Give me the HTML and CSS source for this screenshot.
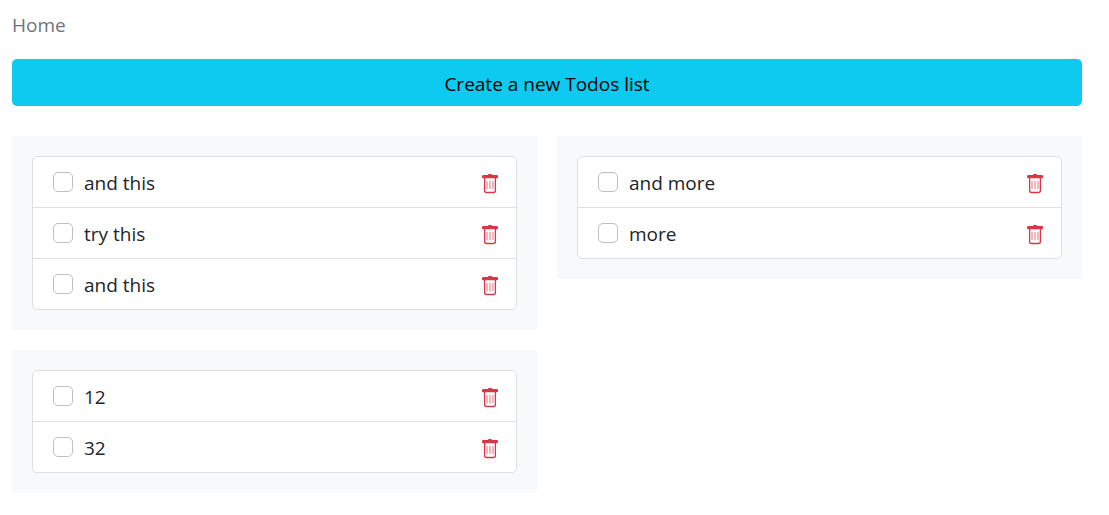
FILE: index.html
```html
<!DOCTYPE html>
<html lang="en">
<head>
<meta charset="utf-8">
<meta name="viewport" content="width=device-width, initial-scale=1">
<title>Todos</title>
<link rel="stylesheet" href="styles.css">
</head>
<body>
<svg class="sprite" aria-hidden="true">
  <symbol id="trash" viewBox="0 0 16 20">
    <path fill="currentColor" d="M1.200 1H6V.6Q6.200 0 7 0h2q.8 0 1 .6V1h4.800Q16 1 16 2.200v1Q16 4.200 14.800 4.200H1.200Q0 4.200 0 3.200v-1Q0 1 1.200 1z"/>
    <path fill="none" stroke="currentColor" stroke-width="1.300" d="M2.600 4v12.500a2 2 0 0 0 2 2h6.800a2 2 0 0 0 2-2V4"/>
    <path fill="none" stroke="currentColor" stroke-opacity=".6" stroke-width="1.200" stroke-linecap="round" d="M5 7.400v7.200M8 7.400v7.200M11 7.400v7.200"/>
  </symbol>
</svg>
<main class="page">
  <nav class="breadcrumb" aria-label="breadcrumb"><span aria-current="page">Home</span></nav>
  <button class="create" type="button">Create a new Todos list</button>
  <div class="lists">
    <section class="card">
      <ul class="list">
        <li class="item"><label class="todo"><input class="check" type="checkbox">and this</label><button class="delete" type="button" aria-label="Delete"><svg class="icon"><use href="#trash"/></svg></button></li>
        <li class="item"><label class="todo"><input class="check" type="checkbox">try this</label><button class="delete" type="button" aria-label="Delete"><svg class="icon"><use href="#trash"/></svg></button></li>
        <li class="item"><label class="todo"><input class="check" type="checkbox">and this</label><button class="delete" type="button" aria-label="Delete"><svg class="icon"><use href="#trash"/></svg></button></li>
      </ul>
    </section>
    <section class="card">
      <ul class="list">
        <li class="item"><label class="todo"><input class="check" type="checkbox">and more</label><button class="delete" type="button" aria-label="Delete"><svg class="icon"><use href="#trash"/></svg></button></li>
        <li class="item"><label class="todo"><input class="check" type="checkbox">more</label><button class="delete" type="button" aria-label="Delete"><svg class="icon"><use href="#trash"/></svg></button></li>
      </ul>
    </section>
    <section class="card">
      <ul class="list">
        <li class="item"><label class="todo"><input class="check" type="checkbox">12</label><button class="delete" type="button" aria-label="Delete"><svg class="icon"><use href="#trash"/></svg></button></li>
        <li class="item"><label class="todo"><input class="check" type="checkbox">32</label><button class="delete" type="button" aria-label="Delete"><svg class="icon"><use href="#trash"/></svg></button></li>
      </ul>
    </section>
  </div>
</main>
</body>
</html>
```
FILE: styles.css
```css
* {
  box-sizing: border-box;
}

body {
  margin: 0;
  background: #fff;
  color: #212529;
  font: 19px/30px "Segoe UI", "Open Sans", "Noto Sans", sans-serif;
}

button {
  font: inherit;
  cursor: pointer;
}

.sprite {
  display: none;
}

.page {
  padding: 10px 27px 22px 12px;
}

.breadcrumb {
  margin-bottom: 19px;
  color: #6c757d;
}

.create {
  display: block;
  width: 100%;
  margin-bottom: 30px;
  padding: 10px 16px 7px;
  border: 0;
  border-radius: 5px;
  background: #0dcaf0;
  color: #000;
}

.lists {
  display: grid;
  grid-template-columns: 1fr 1fr;
  align-items: start;
  gap: 20px;
}

.card {
  padding: 20px;
  background: #f8f9fa;
}

.list {
  margin: 0;
  padding: 0;
  border: 1px solid #dfdfdf;
  border-radius: 5px;
  background: #fff;
  list-style: none;
}

.item {
  display: flex;
  align-items: center;
  padding: 11px 18px 9px 20px;
}

.item + .item {
  border-top: 1px solid #dfdfdf;
}

.todo {
  display: flex;
  flex: 1;
  align-items: center;
  gap: 11px;
}

.check {
  appearance: none;
  width: 20px;
  height: 20px;
  margin: 0 0 2px;
  border: 1px solid #bfbfbf;
  border-radius: 5px;
  background: #fff;
}

.check:checked {
  border-color: #0d6efd;
  background: #0d6efd;
}

.delete {
  display: flex;
  padding: 2px 0 0;
  border: 0;
  background: none;
  color: #dc3545;
}

.icon {
  width: 16px;
  height: 20px;
}
```
